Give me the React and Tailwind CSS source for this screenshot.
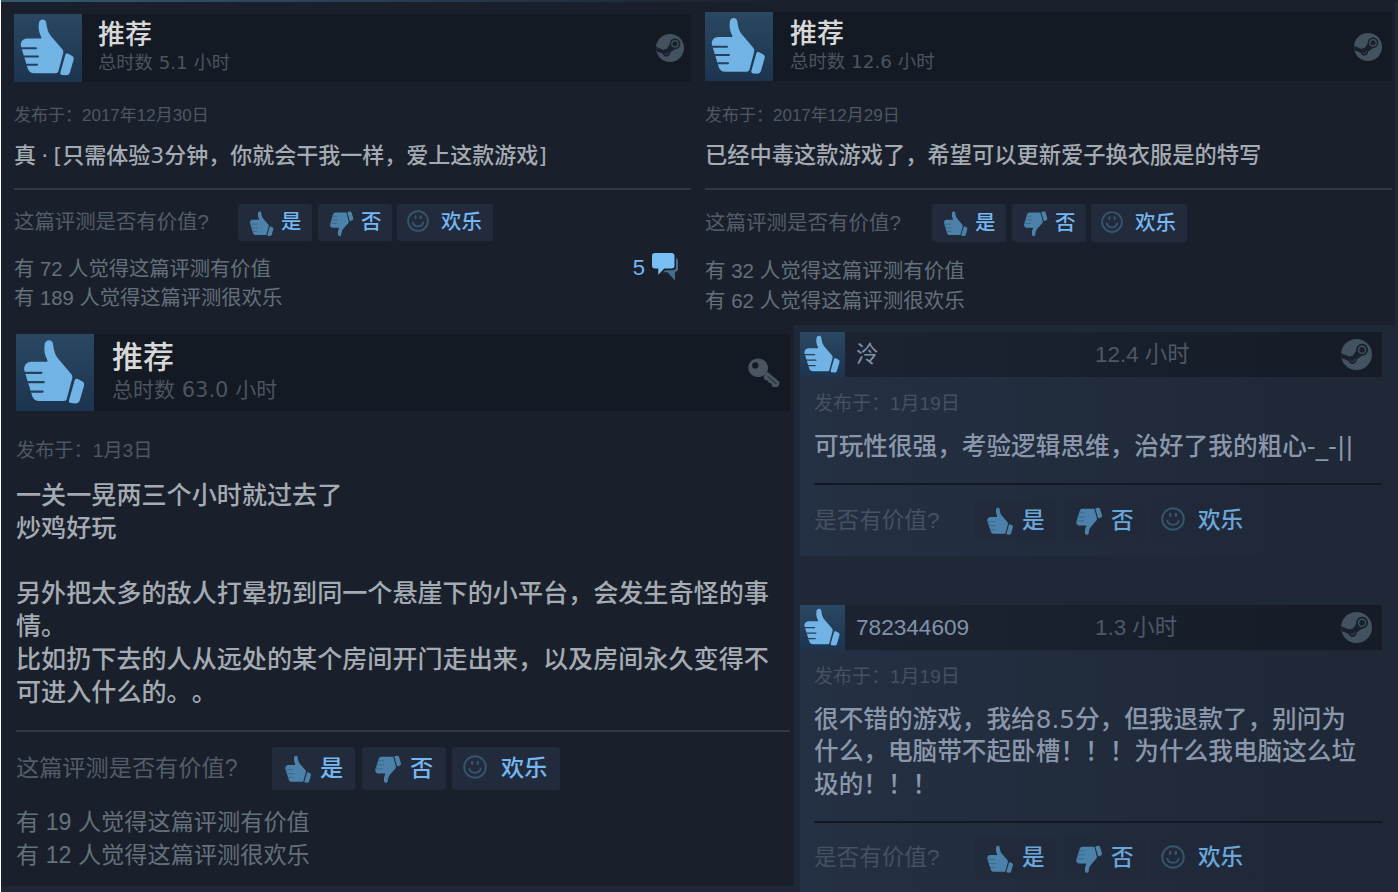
import clsx from 'clsx';

const ARIAL = "font-['Liberation_Sans','Noto_Sans_CJK_SC',sans-serif]";
const WIDE = "font-['DejaVu_Sans','Noto_Sans_CJK_SC',sans-serif]";

// spacing differs per card because every one is shown at its own scale
const wideStyles = {
    first: {
        card: 'w-[690px] pl-[13px] pt-[12px]',
        header: 'h-[68px]',
        thumb: 'w-[68px]',
        titles: 'pl-4 pt-[5px]',
        title: 'text-[27px] leading-[32px]',
        hours: 'text-[18.3px] leading-[24px]',
        end: 'pr-[7px]',
        date: 'mt-[22px] h-6 text-[17px] leading-[24px]',
        body: 'mt-[11px] text-[22px] leading-[33px] [word-spacing:-1.7px]',
        rule: 'mt-4',
        vote: 'mt-[14px] h-[37px] text-[20.4px]',
        question: 'w-[224px]',
        counts: 'mt-[14px] text-[20.3px] leading-[29px]',
    },
    second: {
        card: 'w-[701px] pl-[14px] pt-[10px]',
        header: 'h-[69px]',
        thumb: 'w-[68px]',
        titles: 'pl-[17px] pt-[6px]',
        title: 'text-[27px] leading-[32px]',
        hours: 'text-[18.4px] leading-[24px]',
        end: 'pr-[10px]',
        date: 'mt-[23px] h-6 text-[17px] leading-[24px]',
        body: 'mt-[11px] text-[22.25px] leading-[33px]',
        rule: 'mt-4',
        vote: 'mt-[14px] h-[38px] text-[20.5px]',
        question: 'w-[227px]',
        counts: 'mt-[14px] text-[20.5px] leading-[29.5px]',
    },
    third: {
        card: 'w-[789px] pl-[15px] pt-[9px]',
        header: 'h-[77px]',
        thumb: 'w-[78px]',
        titles: 'pl-[18px] pt-[6px]',
        title: 'text-[31px] leading-[36px]',
        hours: 'text-[21px] leading-[28px]',
        end: 'pr-[10px]',
        date: 'mt-[27px] h-[26px] text-[19.2px] leading-[26px]',
        body: 'mt-[16px] text-[25.1px] leading-[32.83px]',
        rule: 'mt-5',
        vote: 'mt-[15px] h-[43px] text-[23.2px]',
        question: 'w-[256px]',
        counts: 'mt-4 text-[23.2px] leading-[33px]',
    },
};

function Thumb({ className, down, cut = '#24405c' }) {
    return (
        <svg viewBox="0 0 68 68" className={className}>
            <g transform={down ? 'matrix(1 0 0 -1 0 67)' : undefined}>
                <path
                    fill="currentColor"
                    d="M25 8.5C25.6 5 31.4 4 32.2 8.5C32.8 13 33.5 17.5 36.5 21.5L48.5 35.5C49.6 37 49.4 38.5 49 40L44.5 57C44 58.6 43.3 59.2 41.5 59.2H20C16.8 59.2 14.9 57.6 13.9 55L7 32.5C6 28.5 8.6 24.8 13 24.6H26.5C27.4 24.6 27.6 23.8 27.2 23C24.8 18.5 24 13.5 25 8.5Z"
                />
                <path stroke={cut} strokeWidth="2" strokeLinecap="round" fill="none" d="M7 34.3H22M10 42.5H24M13 50.8H23" />
                <path fill="currentColor" d="M54.2 39.8L58.3 42C59.6 42.8 60 44 59.6 45.8L56 58.2C55.4 60.3 54.2 61.2 52 61.3L48.4 61C46.6 60.8 46 59.8 46.4 58.2L51.3 41C51.8 39.6 52.8 39.2 54.2 39.8Z" />
            </g>
        </svg>
    );
}

function Smiley({ className }) {
    return (
        <svg viewBox="0 0 22 22" fill="none" stroke="currentColor" className={className}>
            <circle cx="11" cy="11" r="9.9" strokeWidth="1.8" />
            <path d="M5.8 12.5C7 17.6 15 17.6 16.2 12.5" strokeWidth="1.8" strokeLinecap="round" />
            <path d="M8.4 6.4V8M13.6 6.4V8" strokeWidth="2.2" strokeLinecap="round" />
        </svg>
    );
}

function SteamIcon({ className }) {
    return (
        <svg viewBox="0 0 28 28" className={className}>
            <circle cx="14" cy="14" r="14" fill="currentColor" />
            <path fill="#18212c" d="M0 12.8L7.6 15.9C8.6 15.2 9.6 15 10.6 15.1L13.6 10.8C13.4 7 16 4.4 19 4.4C22 4.4 24.4 6.8 24.4 9.8C24.4 12.8 22 15.2 18.9 15.2L14.2 18.6C14.2 21 12.5 22.6 10.4 22.6C8.5 22.6 7.1 21.4 6.7 19.7L.4 17.2Z" />
            <circle cx="19" cy="9.8" r="3.2" fill="none" stroke="currentColor" strokeWidth="1.3" />
            <path d="M8.6 19.8C10.6 21.2 12.8 19.8 12.4 17.8" fill="none" stroke="currentColor" strokeWidth=".8" />
        </svg>
    );
}

function KeyIcon() {
    return (
        <svg viewBox="0 0 32 30" className="h-[30px] w-8 text-[#495661]">
            <path fill="currentColor" fillRule="evenodd" d="M10 .5C15.4.5 20 4.6 20 9.7S15.7 19 10.2 19S.4 14.9.4 9.7S4.6.5 10 .5ZM7.3 4.2A3.2 3.2 0 1 0 7.3 10.6A3.2 3.2 0 1 0 7.3 4.2Z" />
            <path fill="currentColor" d="M19.3 13.8L31 23.6C31.9 25.6 31 28.4 29 29L25.6 29.3L23.6 27.4L23.4 25.2L20.9 25L20 22.8L16.6 21.8L15.6 18.4Z" />
            <path stroke="#2a3541" strokeWidth="1.2" d="M19.5 18.2L28.6 26" />
        </svg>
    );
}

function ChatIcon() {
    return (
        <svg viewBox="0 0 26 28" className="h-7 w-[26px]">
            <path fill="#456d8f" d="M24 5C25.4 5.4 26 6.4 26 8V15.5C26 17.8 25 18.8 23 18.8V27.6L15.5 19.3H11L13.5 17.3H20C22.8 17.3 24 16 24 13.5Z" />
            <path fill="#78bff3" d="M3 0H19.5C21.6 0 22.5 1 22.5 3V12.5C22.5 14.6 21.5 15.5 19.5 15.5H12.2L6.3 21.8V15.5H3C1 15.5 0 14.5 0 12.5V3C0 1 1 0 3 0Z" />
        </svg>
    );
}

function ThumbTile({ className }) {
    return (
        <div className={clsx('shrink-0 bg-linear-to-b from-[#2a4862] to-[#1c344f] text-[#70b3e4]', className)}>
            <Thumb className="h-full w-full" />
        </div>
    );
}

const voteSizes = {
    regular: {
        thumb: 'ml-[9px] mt-[2px] mr-[4px] size-[30px]',
        yes: 'w-[74px] mr-[6px]',
        no: 'w-[74px] mr-[5px]',
        funny: 'w-[96px]',
        smiley: 'ml-[10px] mr-[12px] mb-[3px] size-[22px]',
    },
    large: {
        thumb: 'ml-[10px] mt-[2px] mr-[5px] size-[33px]',
        yes: 'w-[83px] mr-[7px]',
        no: 'w-[84px] mr-[6px]',
        funny: 'w-[108px]',
        smiley: 'ml-[11px] mr-[14px] mb-[3px] size-6',
    },
    small: {
        thumb: 'ml-[9px] mt-[2px] mr-[5px] size-[33px]',
        yes: 'w-[81px] mr-[8px]',
        no: 'w-[81px] mr-[5px]',
        funny: 'w-[105px]',
        smiley: 'ml-[11px] mr-[13px] mb-[3px] size-6',
    },
};

function VoteButtons({ size }) {
    const s = voteSizes[size];
    const small = size === 'small';
    const button = clsx('flex h-full items-center rounded-[3px]', small ? 'bg-[#212a3b]/60' : 'bg-[#212b3c]');
    return (
        <div className={clsx('flex h-full font-medium', small ? 'text-[#6ba6d9]' : 'text-[#76b7f2]')}>
            <div className={clsx(button, s.yes)}>
                <Thumb cut="#39668a" className={clsx('shrink-0 text-[#4c82aa]', s.thumb)} />
                是
            </div>
            <div className={clsx(button, s.no)}>
                <Thumb down cut="#39668a" className={clsx('shrink-0 text-[#4c82aa]', s.thumb)} />
                否
            </div>
            <div className={clsx(button, s.funny)}>
                <Smiley className={clsx('shrink-0 text-[#38546d]', s.smiley)} />
                欢乐
            </div>
        </div>
    );
}

function WideReview({ variant, hours, date, body, counts, icon, comments }) {
    const s = wideStyles[variant];
    return (
        <article className={clsx('shrink-0', s.card, ARIAL)}>
            <div className={clsx('flex bg-[#141a23]', s.header)}>
                <ThumbTile className={s.thumb} />
                <div className={clsx('flex-1', s.titles)}>
                    <h2 className={clsx('font-medium text-[#d8d8d8]', s.title)}>推荐</h2>
                    <p className={clsx('text-[#4c545f]', s.hours, WIDE)}>总时数 {hours} 小时</p>
                </div>
                <div className={clsx('flex items-center', s.end)}>{icon}</div>
            </div>
            <p className={clsx('text-[#4e5864]', s.date)}>发布于：{date}</p>
            <p className={clsx('whitespace-pre font-medium text-[#a4abb3] [text-spacing-trim:space-all]', s.body, WIDE)}>{body}</p>
            <div className={clsx('h-[2px] bg-[#313843]', s.rule)} />
            <div className={clsx('flex items-center', s.vote)}>
                <span className={clsx('text-[#535d69]', s.question)}>这篇评测是否有价值?</span>
                <VoteButtons size={variant === 'third' ? 'large' : 'regular'} />
            </div>
            <div className={clsx('flex justify-between text-[#64707b]', s.counts)}>
                <div>
                    <p>有 {counts[0]} 人觉得这篇评测有价值</p>
                    <p>有 {counts[1]} 人觉得这篇评测很欢乐</p>
                </div>
                {comments && (
                    <div className="flex h-6 items-center gap-[7px] pr-[13px] text-[22px] text-[#76b7f2]">
                        {comments}
                        <ChatIcon />
                    </div>
                )}
            </div>
        </article>
    );
}

function SmallReview({ name, hours, body, className }) {
    return (
        <article className={clsx('w-[582px]', className, ARIAL)}>
            <div className="flex h-[45px] items-center bg-linear-to-r from-[#1c2433] to-[#151c27] text-[22.6px]">
                <ThumbTile className="size-[45px]" />
                <span className="w-[250px] pl-[11px] text-[#8292aa]">{name}</span>
                <span className="flex-1 text-[22.4px] text-[#4c5868]">{hours} 小时</span>
                <SteamIcon className="mr-[10px] size-[31px] text-[#435260]" />
            </div>
            <div className="bg-linear-to-r from-[#243043] to-[#1f2837] to-90% pb-[15px] pl-[14px]">
                <p className="pt-[14px] text-[19px] leading-[26px] text-[#465162]">发布于：1月19日</p>
                <p className={clsx('mt-[14px] whitespace-pre text-[24.65px] leading-[32.2px] font-medium text-[#8a97ab]', WIDE)}>{body}</p>
                <div className="mt-5 h-[2px] bg-[#121924]" />
                <div className="mt-[15px] flex h-[41px] items-center text-[22.6px]">
                    <span className="w-[161px] text-[#465162]">是否有价值?</span>
                    <VoteButtons size="small" />
                </div>
            </div>
        </article>
    );
}

export default function App() {
    const steam = <SteamIcon className="size-7 text-[#44515e]" />;
    return (
        <div className="flex h-[892px] w-[1398px] flex-col overflow-hidden border-l border-white bg-[#1f2836]">
            <div className="h-[2px] shrink-0 bg-linear-to-r from-[#355a70] via-[#24364b] via-35% to-[#1b212c] to-55%" />
            <div className="flex h-[323px] w-[1394px] shrink-0 bg-[#1a202b]">
                <WideReview
                    variant="first"
                    hours="5.1"
                    date="2017年12月30日"
                    body="真 · [只需体验3分钟，你就会干我一样，爱上这款游戏]"
                    counts={[72, 189]}
                    comments={5}
                    icon={steam}
                />
                <WideReview
                    variant="second"
                    hours="12.6"
                    date="2017年12月29日"
                    body="已经中毒这款游戏了，希望可以更新爱子换衣服是的特写"
                    counts={[32, 62]}
                    icon={steam}
                />
            </div>
            <div className="flex flex-1">
                <div className="h-[561px] w-[793px] bg-[#1a202b]">
                    <WideReview
                        variant="third"
                        hours="63.0"
                        date="1月3日"
                        body={'一关一晃两三个小时就过去了\n炒鸡好玩\n\n另外把太多的敌人打晕扔到同一个悬崖下的小平台，会发生奇怪的事\n情。\n比如扔下去的人从远处的某个房间开门走出来，以及房间永久变得不\n可进入什么的。。'}
                        counts={[19, 12]}
                        icon={<KeyIcon />}
                    />
                </div>
                <div className="pl-[6px] pt-[7px]">
                    <SmallReview name="泠" hours="12.4" body="可玩性很强，考验逻辑思维，治好了我的粗心-_-||" />
                    <SmallReview
                        className="mt-[49px]"
                        name="782344609"
                        hours="1.3"
                        body={'很不错的游戏，我给8.5分，但我退款了，别问为\n什么，电脑带不起卧槽！！！为什么我电脑这么垃\n圾的！！！'}
                    />
                </div>
            </div>
        </div>
    );
}
